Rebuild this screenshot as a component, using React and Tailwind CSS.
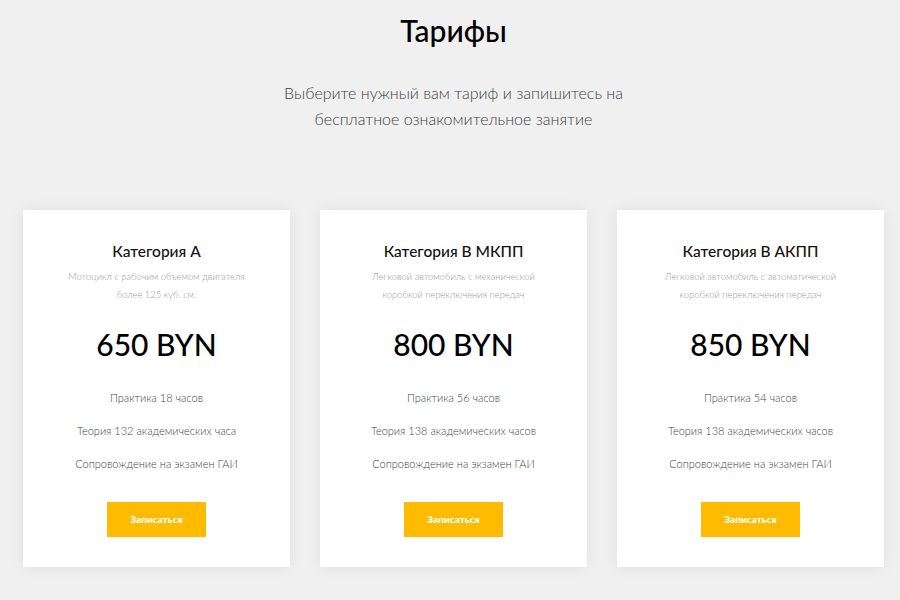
import React from "react";

const plans = [
  {
    title: "Категория А",
    desc: ["Мотоцикл с рабочим объемом двигателя", "более 125 куб. см."],
    price: "650 BYN",
    features: ["Практика 18 часов", "Теория 132 академических часа", "Сопровождение на экзамен ГАИ"],
  },
  {
    title: "Категория В МКПП",
    desc: ["Легковой автомобиль с механической", "коробкой переключения передач"],
    price: "800 BYN",
    features: ["Практика 56 часов", "Теория 138 академических часов", "Сопровождение на экзамен ГАИ"],
  },
  {
    title: "Категория В АКПП",
    desc: ["Легковой автомобиль с автоматической", "коробкой переключения передач"],
    price: "850 BYN",
    features: ["Практика 54 часов", "Теория 138 академических часов", "Сопровождение на экзамен ГАИ"],
  },
];

export default function App() {
  return (
    <div
      className="w-[900px] h-[600px] overflow-hidden bg-[#f0f0f0] pl-[23px] pr-[16px]"
      style={{ fontFamily: "Lato, 'Noto Sans', sans-serif" }}
    >
      <div className="flex flex-col items-center pt-[12px]">
        <h1 className="text-[30px] leading-[36px] font-medium text-black">Тарифы</h1>
        <p className="mt-[32px] text-center text-[16px] leading-[26px] text-[#3f3f3f] font-light">
          Выберите нужный вам тариф и запишитесь на
          <br />
          бесплатное ознакомительное занятие
        </p>
      </div>
      <div className="mt-[78px] flex gap-[30px]">
        {plans.map((p) => (
          <div
            key={p.title}
            className="w-[267px] bg-white shadow-[0_0_14px_rgba(0,0,0,0.07)] flex flex-col items-center pt-[31px] pb-[30px]"
          >
            <div className="text-[15.5px] leading-[20px] font-medium text-[#111]">{p.title}</div>
            <div className="mt-[7px] text-center text-[9.4px] leading-[18px] text-[#9a9a9a] font-light">
              {p.desc[0]}
              <br />
              {p.desc[1]}
            </div>
            <div className="mt-[22px] text-[30px] leading-[36px] font-medium text-black">{p.price}</div>
            <div className="mt-[26px] flex flex-col items-center gap-[13px]">
              {p.features.map((f) => (
                <div key={f} className="text-[11px] leading-[20px] text-[#444] font-light">
                  {f}
                </div>
              ))}
            </div>
            <button className="mt-[28px] w-[99px] h-[35px] bg-[#ffbb00] text-white text-[10px] font-black">
              Записаться
            </button>
          </div>
        ))}
      </div>
    </div>
  );
}
